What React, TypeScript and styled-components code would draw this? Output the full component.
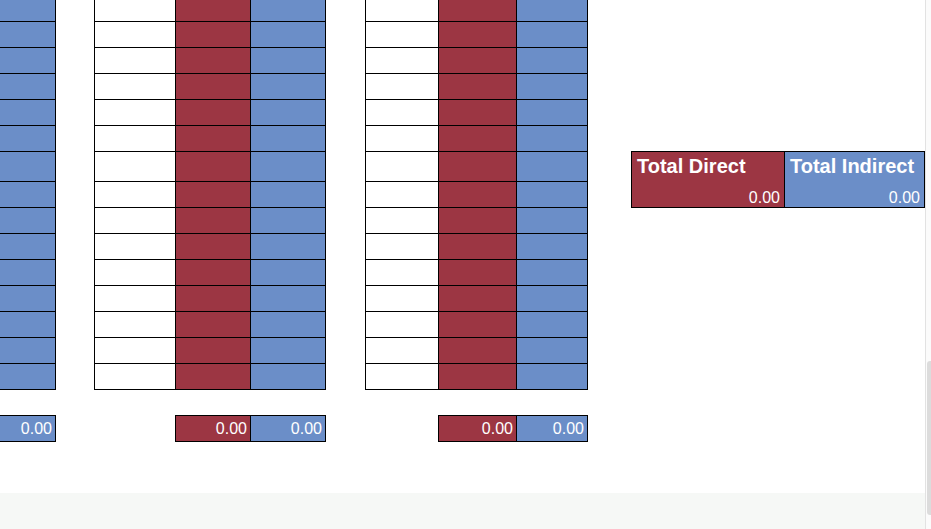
import styled, { createGlobalStyle } from "styled-components";

const GlobalStyle = createGlobalStyle`
  html, body {
    margin: 0;
    padding: 0;
    overflow: hidden;
    background: #fff;
  }
  body {
    font-family: "Liberation Sans", Arial, sans-serif;
  }
`;

const RED = "#9c3643";
const BLUE = "#6b8ec8";

type Tone = "white" | "red" | "blue";

const toneColor = (t: Tone) => (t === "red" ? RED : t === "blue" ? BLUE : "#fff");

const Shell = styled.div`
  display: flex;
  width: 931px;
  height: 529px;
  overflow: hidden;
`;

const Content = styled.div`
  flex: 1;
  display: flex;
  flex-direction: column;
  min-width: 0;
`;

const Main = styled.div`
  height: 493px;
  overflow: hidden;
  background: #fff;
`;

// the sheet is scrolled a little, so the first row and first group are cut off
const Sheet = styled.div`
  display: flex;
  align-items: flex-start;
  margin-top: -5px;
  margin-left: -176px;
`;

const Group = styled.div<{ $offset: number }>`
  display: flex;
  flex-direction: column;
  flex-shrink: 0;
  margin-left: ${(p) => p.$offset}px;
`;

const Table = styled.div<{ $cols: string }>`
  display: grid;
  grid-template-columns: ${(p) => p.$cols};
  grid-template-rows: repeat(6, 26px) 30px repeat(8, 26px);
  border-left: 1px solid #000;
  border-top: 1px solid #000;
`;

const Cell = styled.div<{ $tone: Tone }>`
  box-sizing: border-box;
  border-right: 1px solid #000;
  border-bottom: 1px solid #000;
  background: ${(p) => toneColor(p.$tone)};
`;

const TotalsStrip = styled.div<{ $skip: number }>`
  display: flex;
  align-self: flex-start;
  margin-top: 25px;
  margin-left: ${(p) => p.$skip}px;
  border-left: 1px solid #000;
  border-top: 1px solid #000;
`;

const TotalCell = styled.div<{ $tone: Tone; $w: number }>`
  box-sizing: border-box;
  width: ${(p) => p.$w}px;
  height: 26px;
  padding-right: 3px;
  border-right: 1px solid #000;
  border-bottom: 1px solid #000;
  background: ${(p) => toneColor(p.$tone)};
  color: #fff;
  font-size: 16px;
  line-height: 25px;
  text-align: right;
`;

const Summary = styled.div`
  display: grid;
  grid-template-columns: 153px 140px;
  flex-shrink: 0;
  margin-left: 43px;
  margin-top: 156px;
  border-left: 1px solid #000;
  border-top: 1px solid #000;
`;

const SummaryCell = styled.div<{ $tone: Tone }>`
  box-sizing: border-box;
  height: 56px;
  display: flex;
  flex-direction: column;
  justify-content: space-between;
  padding: 2px 4px 0 5px;
  border-right: 1px solid #000;
  border-bottom: 1px solid #000;
  background: ${(p) => toneColor(p.$tone)};
  color: #fff;
`;

const SummaryTitle = styled.div`
  font-size: 20px;
  font-weight: 700;
  line-height: 24px;
  white-space: nowrap;
`;

const SummaryValue = styled.div`
  font-size: 16px;
  line-height: 18px;
  text-align: right;
`;

const Footer = styled.div`
  flex: 1;
  background: #f6f8f6;
`;

const Scrollbar = styled.div`
  width: 5px;
  border-left: 1px solid #e2e2e2;
  background: #fbfbfb;
  display: flex;
  flex-direction: column;
  align-items: flex-end;
  padding-top: 361px;
`;

const Thumb = styled.div`
  width: 4px;
  height: 154px;
  border-radius: 3px 0 0 3px;
  background: #dcdcdc;
`;

type GroupSpec = { offset: number; widths: [number, number, number] };

const groups: GroupSpec[] = [
  { offset: 0, widths: [81, 75, 75] },
  { offset: 38, widths: [81, 75, 75] },
  { offset: 39, widths: [73, 78, 71] },
];

const tones: Tone[] = ["white", "red", "blue"];
const ROWS = 15;

const SheetGroup = ({ offset, widths }: GroupSpec) => (
  <Group $offset={offset}>
    <Table $cols={widths.map((w) => `${w}px`).join(" ")}>
      {Array.from({ length: ROWS }).flatMap((_, r) =>
        tones.map((t, c) => <Cell key={`${r}-${c}`} $tone={t} />)
      )}
    </Table>
    <TotalsStrip $skip={widths[0]}>
      <TotalCell $tone="red" $w={widths[1]}>0.00</TotalCell>
      <TotalCell $tone="blue" $w={widths[2]}>0.00</TotalCell>
    </TotalsStrip>
  </Group>
);

export default function App() {
  return (
    <>
      <GlobalStyle />
      <Shell>
        <Content>
          <Main>
            <Sheet>
              {groups.map((g, i) => (
                <SheetGroup key={i} {...g} />
              ))}
              <Summary>
                <SummaryCell $tone="red">
                  <SummaryTitle>Total Direct</SummaryTitle>
                  <SummaryValue>0.00</SummaryValue>
                </SummaryCell>
                <SummaryCell $tone="blue">
                  <SummaryTitle>Total Indirect</SummaryTitle>
                  <SummaryValue>0.00</SummaryValue>
                </SummaryCell>
              </Summary>
            </Sheet>
          </Main>
          <Footer />
        </Content>
        <Scrollbar>
          <Thumb />
        </Scrollbar>
      </Shell>
    </>
  );
}
